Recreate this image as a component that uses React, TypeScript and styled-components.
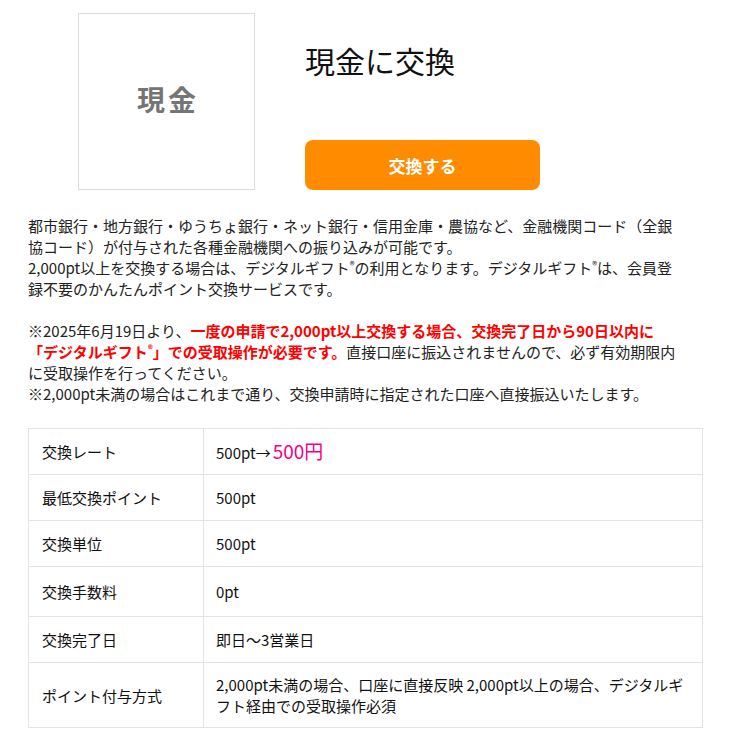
import { createGlobalStyle, styled } from "styled-components";

const GlobalStyle = createGlobalStyle`
  html, body {
    margin: 0;
    padding: 0;
    background: #fff;
  }
  body {
    font-family: "Noto Sans CJK JP", "Noto Sans", sans-serif;
    color: #222;
  }
`;

const rows = [
  { label: "交換レート", value: "rate" },
  { label: "最低交換ポイント", value: "500pt" },
  { label: "交換単位", value: "500pt" },
  { label: "交換手数料", value: "0pt" },
  { label: "交換完了日", value: "即日〜3営業日" },
  {
    label: "ポイント付与方式",
    value:
      "2,000pt未満の場合、口座に直接反映 2,000pt以上の場合、デジタルギフト経由での受取操作必須",
  },
];

function App() {
  return (
    <>
      <GlobalStyle />
      <Page>
        <Header>
          <Thumb>
            <ThumbText>現金</ThumbText>
          </Thumb>
          <HeadRight>
            <Title>現金に交換</Title>
            <ExchangeButton type="button">交換する</ExchangeButton>
          </HeadRight>
        </Header>

        <Description>
          <p>
            都市銀行・地方銀行・ゆうちょ銀行・ネット銀行・信用金庫・農協など、金融機関コード（全銀協コード）が付与された各種金融機関への振り込みが可能です。
            <br />
            2,000pt以上を交換する場合は、デジタルギフト<Sup>®</Sup>
            の利用となります。デジタルギフト<Sup>®</Sup>
            は、会員登録不要のかんたんポイント交換サービスです。
          </p>
          <p>
            ※2025年6月19日より、
            <Alert>
              一度の申請で2,000pt以上交換する場合、交換完了日から90日以内に「デジタルギフト
              <Sup>®</Sup>」での受取操作が必要です。
            </Alert>
            直接口座に振込されませんので、必ず有効期限内に受取操作を行ってください。
            <br />
            ※2,000pt未満の場合はこれまで通り、交換申請時に指定された口座へ直接振込いたします。
          </p>
        </Description>

        <InfoTable>
          <colgroup>
            <col style={{ width: 175 }} />
            <col />
          </colgroup>
          <tbody>
            {rows.map((row) => (
              <Row key={row.label} $tall={row.label === "交換手数料"}>
                <LabelCell>{row.label}</LabelCell>
                <ValueCell>
                  {row.value === "rate" ? (
                    <>
                      500pt→<Yen>500円</Yen>
                    </>
                  ) : (
                    row.value
                  )}
                </ValueCell>
              </Row>
            ))}
          </tbody>
        </InfoTable>
      </Page>
    </>
  );
}

export default App;

const Page = styled.div`
  width: 675px;
  padding: 13px 0 20px 28px;
`;

const Header = styled.div`
  display: flex;
  gap: 50px;
  padding-left: 50px;
`;

const Thumb = styled.div`
  width: 175px;
  height: 175px;
  border: 1px solid #dcdcdc;
  display: flex;
  align-items: center;
  justify-content: center;
`;

const ThumbText = styled.span`
  font-size: 28px;
  font-weight: 700;
  color: #757575;
  letter-spacing: 3px;
  margin: 0 0 5px 3px;
`;

const HeadRight = styled.div`
  display: flex;
  flex-direction: column;
  justify-content: space-between;
  width: 235px;
`;

const Title = styled.h1`
  margin: 25px 0 0 0;
  font-size: 30px;
  font-weight: 400;
  line-height: 44px;
  color: #111;
`;

const ExchangeButton = styled.button`
  height: 50px;
  width: 235px;
  border: none;
  border-radius: 8px;
  background: #ff8c00;
  color: #fff;
  font-family: inherit;
  font-size: 17px;
  font-weight: 700;
  cursor: pointer;
`;

const Description = styled.div`
  margin-top: 25px;
  padding-right: 20px;
  font-size: 15px;
  line-height: 21px;
  color: #222;
  p {
    margin: 0 0 21px 0;
  }
  p:last-child {
    margin-bottom: 0;
  }
`;

const Sup = styled.sup`
  font-size: 10px;
  line-height: 0;
  vertical-align: 5px;
`;

const Alert = styled.strong`
  color: #ff0000;
  font-weight: 700;
`;

const InfoTable = styled.table`
  margin-top: 24px;
  width: 675px;
  table-layout: fixed;
  border-collapse: collapse;
  font-size: 15px;
  line-height: 21px;
  color: #111;
`;

const Row = styled.tr<{ $tall?: boolean }>`
  height: ${(p) => (p.$tall ? "50px" : "46px")};
`;

const LabelCell = styled.td`
  border: 1px solid #e3e3e3;
  padding: 11px 13px;
  vertical-align: middle;
`;

const ValueCell = styled.td`
  border: 1px solid #e3e3e3;
  padding: 11px 12px;
  vertical-align: middle;
`;

const Yen = styled.span`
  color: #f5007f;
  font-size: 19px;
  margin-left: 2px;
`;
